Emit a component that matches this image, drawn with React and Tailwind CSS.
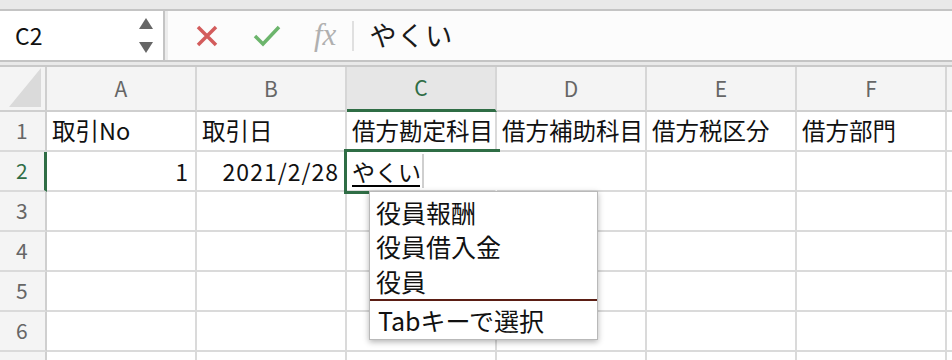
import React from 'react';

const cols = ['A', 'B', 'C', 'D', 'E', 'F', ''];
const row1 = ['取引No', '取引日', '借方勘定科目', '借方補助科目', '借方税区分', '借方部門', ''];

const Cell = ({ children, className = '' }) => (
    <div className={`w-[150px] shrink-0 h-full border-r-2 border-b-2 border-[#dadada] flex items-center ${className}`}>
        {children}
    </div>
);

const RowHead = ({ n, active }) => (
    <div className={`w-[47px] shrink-0 h-full bg-[#f4f4f4] border-b-2 border-[#dadada] flex items-center pl-[16px] text-[21px] ${active ? 'text-[#2f6d45] border-r-[3px] border-r-[#2f6d45]' : 'text-[#666] border-r-2 border-r-[#cfcfcf]'}`}>
        {n}
    </div>
);

export default function App() {
    return (
        <div className="w-[952px] h-[360px] overflow-hidden bg-white font-['Noto_Sans_CJK_JP','Noto_Sans',sans-serif] text-[#111]">
            {/* formula bar */}
            <div className="bg-[#e9e9e9] pt-[9px] pb-[3px] border-b-2 border-[#c9c9c9]">
                <div className="h-[53px] flex bg-white border-y-2 border-[#c4c4c4]">
                    <div className="w-[165px] border-r-2 border-[#c4c4c4] flex items-center justify-between pl-[15px] pr-[10px]">
                        <span className="text-[23px]">C2</span>
                        <div className="flex flex-col gap-[13px]">
                            <svg width="14" height="11" viewBox="0 0 14 11"><path d="M7 0 L14 11 L0 11 Z" fill="#666" /></svg>
                            <svg width="14" height="11" viewBox="0 0 14 11"><path d="M0 0 L14 0 L7 11 Z" fill="#666" /></svg>
                        </div>
                    </div>
                    <div className="w-[3px] bg-[#ececec]" />
                    <div className="flex-1 flex items-center bg-[#fcfcfc]">
                        <svg className="ml-[27px]" width="24" height="22" viewBox="0 0 24 22">
                            <path d="M3 2 L21 20 M21 2 L3 20" stroke="#d35c5c" strokeWidth="3.5" fill="none" />
                        </svg>
                        <svg className="ml-[34px]" width="28" height="22" viewBox="0 0 28 22">
                            <path d="M2 11 L10 19 L26 2" stroke="#6cb56c" strokeWidth="3.5" fill="none" />
                        </svg>
                        <span className="ml-[33px] text-[31px] italic text-[#b0b0b0] font-['Liberation_Serif',serif] leading-none pb-[3px]">fx</span>
                        <div className="ml-[16px] w-[2px] h-[30px] bg-[#e0e0e0]" />
                        <span className="ml-[15px] text-[27px] tracking-[1px] text-[#1a1a1a]">やくい</span>
                    </div>
                </div>
            </div>

            {/* sheet */}
            <div className="relative">
                <div className="flex h-[45px]">
                    <div className="w-[47px] shrink-0 h-full bg-[#f4f4f4] border-r-2 border-b-2 border-[#cfcfcf] flex items-end justify-end pr-[4px] pb-[3px]">
                        <svg width="32" height="39" viewBox="0 0 32 39"><path d="M32 0 L32 39 L0 39 Z" fill="#dadada" /></svg>
                    </div>
                    {cols.map((c, i) => (
                        <div
                            key={i}
                            className={`w-[150px] shrink-0 h-full border-r-2 border-[#d6d6d6] flex items-center justify-center text-[21px] ${c === 'C' ? 'bg-[#e6e6e6] text-[#2f6d45] border-b-[3px] border-b-[#2f6d45]' : 'bg-[#f4f4f4] text-[#666] border-b-2 border-b-[#cfcfcf]'}`}
                        >
                            {c}
                        </div>
                    ))}
                </div>

                <div className="flex h-[40px]">
                    <RowHead n="1" />
                    {row1.map((t, i) => (
                        <Cell key={i} className="pl-[5px] text-[23.5px] whitespace-nowrap">{t}</Cell>
                    ))}
                </div>

                <div className="flex h-[40px]">
                    <RowHead n="2" active />
                    <Cell className="justify-end pr-[7px] text-[23px]">1</Cell>
                    <Cell className="justify-end pr-[6px] text-[23px] tracking-[1px]">2021/2/28</Cell>
                    <Cell className="pl-[5px] border-r-white">
                        <span className="text-[23px] leading-[34px] border-r-2 border-[#cfcfcf] pr-[1px] relative">
                            やくい
                            <span className="absolute left-0 right-[2px] bottom-[1px] h-[2px] bg-black" />
                        </span>
                    </Cell>
                    <Cell />
                    <Cell />
                    <Cell />
                    <Cell />
                </div>

                {['3', '4', '5', '6', ''].map((n, r) => (
                    <div key={r} className="flex h-[40px]">
                        <RowHead n={n} />
                        {cols.map((c, i) => <Cell key={i} />)}
                    </div>
                ))}

                {/* active cell border (edit mode: right side open) */}
                <div className="absolute left-[344px] top-[82px] w-[156px] h-[45px] border-t-[3px] border-l-[3px] border-b-[3px] border-[#2f6d45] pointer-events-none" />

                {/* autocomplete list */}
                <div className="absolute left-[369px] top-[124px] w-[229px] h-[149px] bg-white border border-[#b9b9b9] shadow-[0_2px_6px_rgba(0,0,0,0.3)] text-[25px] leading-none">
                    <div className="h-[36px] flex items-center pl-[6px] pt-[5px]">役員報酬</div>
                    <div className="h-[36px] flex items-center pl-[6px]">役員借入金</div>
                    <div className="h-[35px] flex items-center pl-[6px]">役員</div>
                    <div className="h-[2px] bg-[#5b1e14]" />
                    <div className="h-[38px] flex items-center pl-[8px]">Tabキーで選択</div>
                </div>
            </div>
        </div>
    );
}
